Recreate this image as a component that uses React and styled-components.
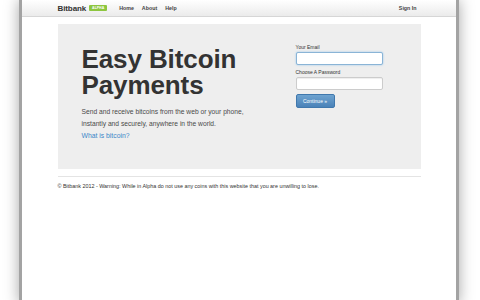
import React from 'react';
import styled, { createGlobalStyle } from 'styled-components';

const GlobalStyle = createGlobalStyle`
  html, body {
    margin: 0;
    padding: 0;
    background: #ffffff;
    font-family: "Liberation Sans", Arial, Helvetica, sans-serif;
    overflow: hidden;
  }
`;

const Stage = styled.div`
  height: 300px;
  padding: 0 21px 0 19px;
  box-sizing: border-box;
  overflow: hidden;
`;

const Window = styled.div`
  height: 304px;
  margin-top: -2px;
  background: #fff;
  border-left: 3px solid #a3a3a3;
  border-right: 3px solid #a3a3a3;
  box-shadow: 0 0 14px rgba(0, 0, 0, 0.35);
`;

const Navbar = styled.div`
  height: 16px;
  margin-top: 2px;
  background: linear-gradient(#ffffff, #ebebeb);
  border-bottom: 1px solid #d6d6d6;
`;

const Container = styled.div`
  width: 363px;
  margin: 0 auto;
`;

const NavInner = styled(Container)`
  display: flex;
  align-items: center;
  height: 16px;
`;

const Brand = styled.span`
  font-size: 8px;
  font-weight: bold;
  color: #333;
  letter-spacing: -0.1px;
`;

const Badge = styled.span`
  margin-left: 3px;
  padding: 0 2px;
  height: 6px;
  line-height: 6px;
  font-size: 3.5px;
  font-weight: bold;
  color: #fff;
  background: #8dc63f;
  border-radius: 1px;
  width: 14px;
  text-align: center;
`;

const NavLink = styled.span`
  font-size: 5.3px;
  font-weight: bold;
  color: #444;
  margin-left: ${p => p.first ? '12px' : '8px'};
`;

const SignIn = styled(NavLink)`
  margin-left: auto;
  margin-right: 4px;
`;

const Hero = styled(Container)`
  margin-top: 7px;
  height: 145px;
  background: #eeeeee;
  box-sizing: border-box;
  padding: 22px 24px 0;
  display: flex;
`;

const Lead = styled.div`
  flex: 1;
`;

const Title = styled.h1`
  margin: 0;
  font-size: 26px;
  line-height: 26px;
  font-weight: bold;
  color: #333;
  letter-spacing: -0.1px;
`;

const Text = styled.p`
  margin: 8px 0 0;
  font-size: 6.7px;
  line-height: 12px;
  color: #4a4a4a;
`;

const More = styled.a`
  display: block;
  margin-top: 2px;
  font-size: 6.8px;
  color: #3a86c8;
  text-decoration: none;
`;

const Form = styled.div`
  width: 87px;
  margin-top: -2px;
  margin-right: 14px;
  display: flex;
  flex-direction: column;
`;

const Label = styled.label`
  font-size: 5px;
  color: #333;
  margin-bottom: 2px;
`;

const Input = styled.div`
  height: 11px;
  background: #fff;
  border: 1px solid ${p => p.focus ? '#8ab4d6' : '#cccccc'};
  box-shadow: ${p => p.focus ? '0 0 2px rgba(82,168,236,0.6)' : 'inset 0 1px 1px rgba(0,0,0,0.07)'};
  border-radius: 2px;
  margin-bottom: 4px;
`;

const Button = styled.button`
  align-self: flex-start;
  margin-top: 0;
  height: 14px;
  width: 39px;
  padding: 0;
  font-family: inherit;
  font-size: 5px;
  color: #fff;
  background: linear-gradient(#6ea3d0, #4a82b8);
  border: 1px solid #4078ad;
  border-radius: 2px;
`;

const Footer = styled(Container)`
  margin-top: 7px;
  border-top: 1px solid #e4e4e4;
  padding-top: 6px;
  font-size: 5.4px;
  color: #333;
`;

export default function App() {
  return (
    <>
      <GlobalStyle />
      <Stage>
        <Window>
          <Navbar>
            <NavInner>
              <Brand>Bitbank</Brand>
              <Badge>ALPHA</Badge>
              <NavLink first>Home</NavLink>
              <NavLink>About</NavLink>
              <NavLink>Help</NavLink>
              <SignIn>Sign In</SignIn>
            </NavInner>
          </Navbar>
          <Hero>
            <Lead>
              <Title>Easy Bitcoin<br />Payments</Title>
              <Text>
                Send and receive bitcoins from the web or your phone,<br />
                instantly and securely, anywhere in the world.
              </Text>
              <More href="#">What is bitcoin?</More>
            </Lead>
            <Form>
              <Label>Your Email</Label>
              <Input focus />
              <Label>Choose A Password</Label>
              <Input />
              <Button>Continue »</Button>
            </Form>
          </Hero>
          <Footer>
            © Bitbank 2012 - Warning: While in Alpha do not use any coins with this website that you are unwilling to lose.
          </Footer>
        </Window>
      </Stage>
    </>
  );
}
